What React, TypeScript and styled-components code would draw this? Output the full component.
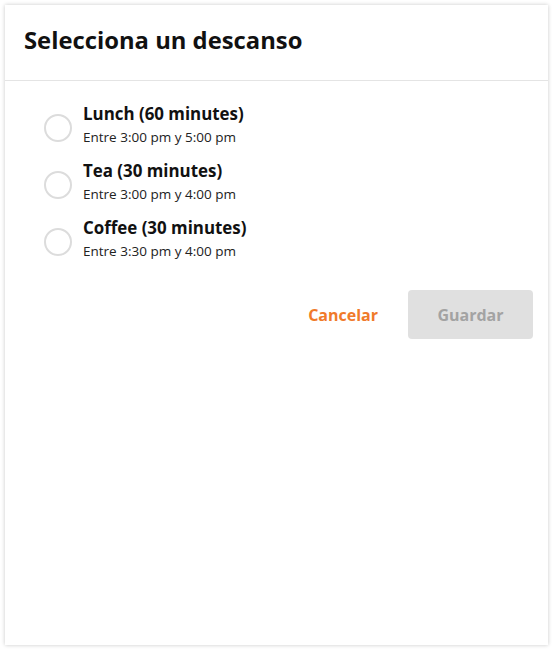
import React, { useState } from "react";
import styled, { createGlobalStyle } from "styled-components";

const Global = createGlobalStyle`
  html, body { margin: 0; padding: 0; background: #ffffff; }
  body { font-family: "Open Sans", "Lato", sans-serif; color: #111; }
  * { box-sizing: border-box; }
`;

const Card = styled.div`
  margin: 5px;
  width: 543px;
  height: 640px;
  background: #fff;
  box-shadow: 0 0 4px rgba(0, 0, 0, 0.22);
  display: flex;
  flex-direction: column;
`;

const Header = styled.div`
  height: 76px;
  padding: 0 0 6px 19px;
  display: flex;
  align-items: center;
  border-bottom: 1px solid #e4e4e4;
`;

const Title = styled.h1`
  margin: 0;
  font-size: 23.8px;
  font-weight: 700;
  color: #111;
`;

const Body = styled.div`
  padding: 21px 15px 0 39px;
  display: flex;
  flex-direction: column;
`;

const List = styled.div`
  display: flex;
  flex-direction: column;
  gap: 11px;
`;

const Row = styled.label`
  display: flex;
  align-items: center;
  gap: 11px;
  cursor: pointer;
`;

const Circle = styled.span<{ $on: boolean }>`
  width: 28px;
  height: 28px;
  border-radius: 50%;
  border: 2px solid ${(p) => (p.$on ? "#f07a2a" : "#dcdcdc")};
  flex-shrink: 0;
  margin-top: 6px;
  display: flex;
  align-items: center;
  justify-content: center;
  &::after {
    content: "";
    width: 14px;
    height: 14px;
    border-radius: 50%;
    background: ${(p) => (p.$on ? "#f07a2a" : "transparent")};
  }
`;

const Texts = styled.div`
  display: flex;
  flex-direction: column;
`;

const Name = styled.span`
  font-size: 16.9px;
  font-weight: 700;
  line-height: 23px;
  color: #111;
`;

const Range = styled.span`
  font-size: 13.5px;
  line-height: 21px;
  margin-top: 2px;
  color: #222;
`;

const Actions = styled.div`
  display: flex;
  justify-content: flex-end;
  align-items: center;
  gap: 30px;
  margin-top: 28px;
`;

const CancelButton = styled.button`
  background: none;
  border: none;
  padding: 0;
  font-family: inherit;
  font-size: 16px;
  font-weight: 700;
  color: #f07a2a;
  cursor: pointer;
`;

const SaveButton = styled.button`
  width: 125px;
  height: 49px;
  border: none;
  border-radius: 4px;
  background: #e0e0e0;
  color: #a3a3a3;
  font-family: inherit;
  font-size: 16px;
  font-weight: 700;
`;

const options = [
  { name: "Lunch (60 minutes)", range: "Entre 3:00 pm y 5:00 pm" },
  { name: "Tea (30 minutes)", range: "Entre 3:00 pm y 4:00 pm" },
  { name: "Coffee (30 minutes)", range: "Entre 3:30 pm y 4:00 pm" },
];

export default function App() {
  const [sel, setSel] = useState<number | null>(null);
  return (
    <>
      <Global />
      <Card>
        <Header>
          <Title>Selecciona un descanso</Title>
        </Header>
        <Body>
          <List>
            {options.map((o, i) => (
              <Row key={o.name} onClick={() => setSel(i)}>
                <Circle $on={sel === i} />
                <Texts>
                  <Name>{o.name}</Name>
                  <Range>{o.range}</Range>
                </Texts>
              </Row>
            ))}
          </List>
          <Actions>
            <CancelButton onClick={() => setSel(null)}>Cancelar</CancelButton>
            <SaveButton disabled={sel === null}>Guardar</SaveButton>
          </Actions>
        </Body>
      </Card>
    </>
  );
}
